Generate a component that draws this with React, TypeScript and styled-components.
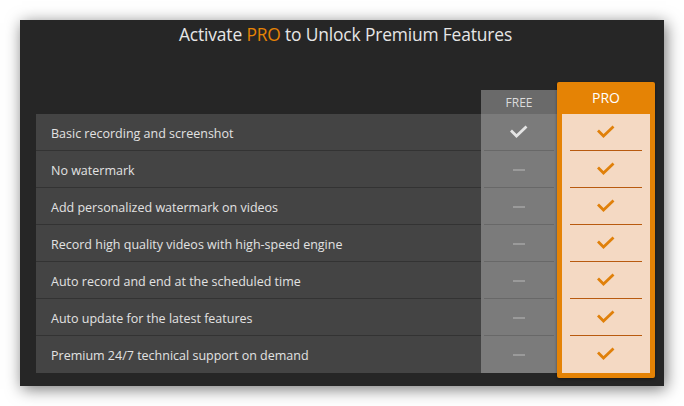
import React from "react";
import styled, { createGlobalStyle } from "styled-components";

const Global = createGlobalStyle`
  html, body { margin: 0; padding: 0; background: #ffffff; }
  body { font-family: "Open Sans", "Noto Sans", sans-serif; }
`;

const Page = styled.div`
  padding: 20px;
  width: 644px;
`;

const Panel = styled.div`
  width: 644px;
  height: 366px;
  background: #262626;
  box-shadow: 2px 3px 15px rgba(0, 0, 0, 0.55);
  display: flex;
  flex-direction: column;
  box-sizing: border-box;
  padding: 0 9px 8px 16px;
`;

const Title = styled.h1`
  margin: 0;
  padding-top: 2px;
  height: 61px;
  box-sizing: border-box;
  text-align: center;
  font-size: 17.4px;
  line-height: 24px;
  font-weight: 400;
  color: #e6e6e6;
  letter-spacing: -0.15px;
`;

const Accent = styled.span`
  color: #e58305;
`;

const Table = styled.div`
  flex: 1;
  display: flex;
  align-items: flex-end;
`;

const FeatureCol = styled.div`
  width: 445px;
  margin-bottom: 5px;
  display: flex;
  flex-direction: column;
`;

const FeatureRow = styled.div`
  height: 37px;
  box-sizing: border-box;
  background: #444444;
  border-bottom: 1px solid #333333;
  display: flex;
  align-items: center;
  padding: 2px 0 0 15px;
  font-size: 12.5px;
  color: #e2e2e2;
  &:last-child { border-bottom: none; }
`;

const FreeCol = styled.div`
  width: 76px;
  margin-bottom: 5px;
  display: flex;
  flex-direction: column;
  background: #7b7b7b;
`;

const FreeHead = styled.div`
  height: 24px;
  background: #6a6a6a;
  color: #dcdcdc;
  font-size: 12px;
  display: flex;
  align-items: center;
  justify-content: center;
  box-sizing: border-box;
`;

const Cell = styled.div<{ $line: string; $inset: number }>`
  height: 37px;
  position: relative;
  display: flex;
  align-items: center;
  justify-content: center;
  &::after {
    content: "";
    position: absolute;
    left: ${(p) => p.$inset}px;
    right: ${(p) => p.$inset}px;
    bottom: 0;
    height: 1px;
    background: ${(p) => p.$line};
  }
  &:last-child::after { display: none; }
`;

const Dash = styled.div`
  width: 12px;
  height: 2px;
  background: #9a9a9a;
`;

const ProCol = styled.div`
  width: 98px;
  box-sizing: border-box;
  background: #e58305;
  border-radius: 2px;
  padding: 0 5px 5px;
  display: flex;
  flex-direction: column;
  box-shadow: 0 1px 3px rgba(0, 0, 0, 0.4);
`;

const ProHead = styled.div`
  height: 32px;
  display: flex;
  align-items: center;
  justify-content: center;
  color: #ffffff;
  font-size: 14px;
  padding-bottom: 1px;
  box-sizing: border-box;
`;

const ProBody = styled.div`
  background: #f4d9c3;
  display: flex;
  flex-direction: column;
`;

const Check = ({ color }: { color: string }) => (
  <svg width="20" height="14" viewBox="0 0 20 14" style={{ marginTop: -1 }}>
    <polyline
      points="2,5.5 7.5,11 17.5,1.5"
      fill="none"
      stroke={color}
      strokeWidth="2.8"
      strokeLinecap="butt"
      strokeLinejoin="miter"
    />
  </svg>
);

const features = [
  "Basic recording and screenshot",
  "No watermark",
  "Add personalized watermark on videos",
  "Record high quality videos with high-speed engine",
  "Auto record and end at the scheduled time",
  "Auto update for the latest features",
  "Premium 24/7 technical support on demand",
];

export default function App() {
  return (
    <>
      <Global />
      <Page>
        <Panel>
          <Title>
            Activate <Accent>PRO</Accent> to Unlock Premium Features
          </Title>
          <Table>
            <FeatureCol>
              {features.map((f) => (
                <FeatureRow key={f}>{f}</FeatureRow>
              ))}
            </FeatureCol>
            <FreeCol>
              <FreeHead>FREE</FreeHead>
              {features.map((f, i) => (
                <Cell key={f} $line="#686868" $inset={3}>
                  {i === 0 ? <Check color="#e4e4e4" /> : <Dash />}
                </Cell>
              ))}
            </FreeCol>
            <ProCol>
              <ProHead>PRO</ProHead>
              <ProBody>
                {features.map((f) => (
                  <Cell key={f} $line="#b85a0f" $inset={8}>
                    <Check color="#e0800a" />
                  </Cell>
                ))}
              </ProBody>
            </ProCol>
          </Table>
        </Panel>
      </Page>
    </>
  );
}
